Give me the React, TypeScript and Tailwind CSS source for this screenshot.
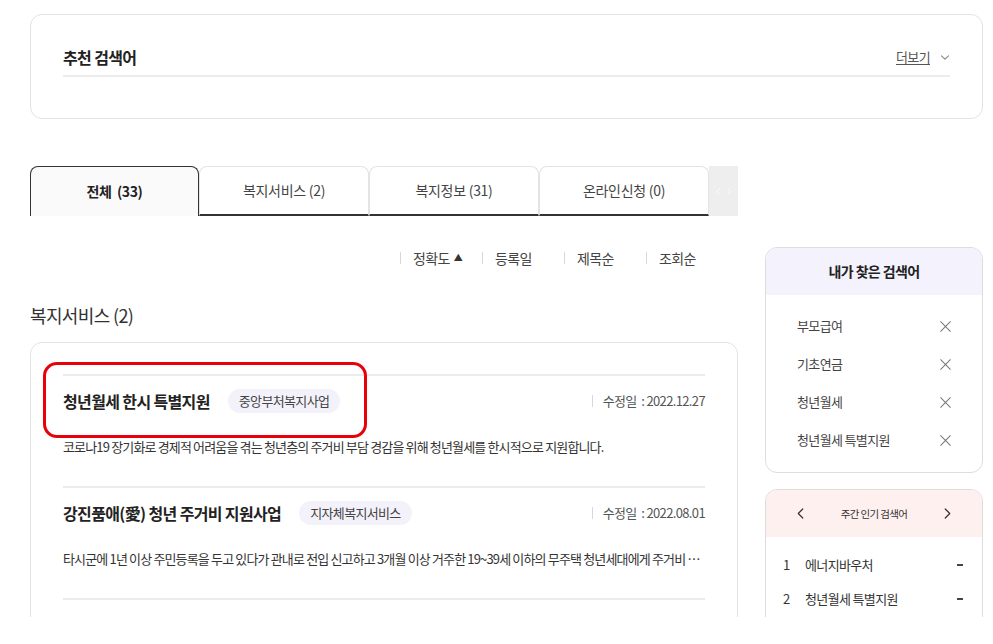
import React from 'react';

const tabs = ['복지서비스 (2)', '복지정보 (31)', '온라인신청 (0)'];
const sorts = ['정확도', '등록일', '제목순', '조회순'];
const myKeywords = ['부모급여', '기초연금', '청년월세', '청년월세 특별지원'];
const popular = ['에너지바우처', '청년월세 특별지원'];

const results = [
  {
    title: '청년월세 한시 특별지원',
    badge: '중앙부처복지사업',
    date: '2022.12.27',
    desc: '코로나19 장기화로 경제적 어려움을 겪는 청년층의 주거비 부담 경감을 위해 청년월세를 한시적으로 지원합니다.',
  },
  {
    title: '강진품애(愛) 청년 주거비 지원사업',
    badge: '지자체복지서비스',
    date: '2022.08.01',
    desc: '타시군에 1년 이상 주민등록을 두고 있다가 관내로 전입 신고하고 3개월 이상 거주한 19~39세 이하의 무주택 청년세대에게 주거비 일부를 지원합니다.',
  },
];

const Chevron = ({ dir, className }: { dir: 'left' | 'right' | 'down'; className?: string }) => {
  const d = dir === 'left' ? 'M9 2 L3 8 L9 14' : dir === 'right' ? 'M3 2 L9 8 L3 14' : 'M2 4 L7 9 L12 4';
  const vb = dir === 'down' ? '0 0 14 13' : '0 0 12 16';
  return (
    <svg viewBox={vb} className={className} fill="none" stroke="currentColor" strokeWidth={1.6} strokeLinecap="round" strokeLinejoin="round">
      <path d={d} />
    </svg>
  );
};

const CloseIcon = () => (
  <svg viewBox="0 0 12 12" className="h-[11px] w-[11px] text-[#777]" fill="none" stroke="currentColor" strokeWidth={1.1}>
    <path d="M0.5 0.5 L11.5 11.5 M11.5 0.5 L0.5 11.5" />
  </svg>
);

export default function App() {
  return (
    <div className="h-[644px] bg-white">
      <div className="h-[617px] overflow-hidden bg-white pl-[30px] pr-[10px] pt-[14px] font-['Noto_Sans_CJK_KR','Noto_Sans',sans-serif] tracking-[-0.04em] text-[#222]">
        {/* 추천 검색어 */}
        <section className="h-[105px] rounded-[12px] border border-[#e2e2e2] px-[32px] pt-[32px]">
          <div className="flex items-center justify-between border-b-2 border-[#ececec] pb-[8px]">
            <h2 className="text-[16px] font-bold leading-[20px]">추천 검색어</h2>
            <button className="flex items-center gap-[10px] text-[13px] leading-[20px] text-[#555]">
              <span className="underline underline-offset-2">더보기</span>
              <Chevron dir="down" className="h-[9px] w-[10px] text-[#888]" />
            </button>
          </div>
        </section>

        <div className="mt-[47px] flex gap-[27px]">
          <main className="w-[708px]">
            {/* tabs */}
            <div className="flex h-[50px]">
              <button className="w-[169px] rounded-t-[8px] border border-b-0 border-[#333] bg-[#fafafa] text-[14px] font-bold tracking-[-0.03em]">
                전체&nbsp; (33)
              </button>
              {tabs.map((t) => (
                <button
                  key={t}
                  className="w-[170px] rounded-t-[8px] border border-[#e4e4e4] border-b-2 border-b-[#333] text-[14px] tracking-[-0.02em] text-[#444]"
                >
                  {t}
                </button>
              ))}
              <div className="flex w-[29px] items-center justify-center gap-[5px] bg-[#eeeeee] text-white">
                <Chevron dir="left" className="h-[9px] w-[6px]" />
                <Chevron dir="right" className="h-[9px] w-[6px]" />
              </div>
            </div>

            {/* sort */}
            <div className="mt-[33px] flex h-[18px] justify-end pr-[10px]">
              {sorts.map((s, i) => (
                <div key={s} className="flex w-[82px] items-center">
                  <span className="h-[12px] w-px bg-[#d8d8d8]" />
                  <span className="ml-[12px] flex items-center gap-[4px] text-[14px] leading-[18px] text-[#444]">
                    {s}
                    {i === 0 && <span className="text-[9px] text-[#333]">▲</span>}
                  </span>
                </div>
              ))}
            </div>

            <h3 className="mt-[36px] text-[18px] leading-[24px] text-[#333]">복지서비스 (2)</h3>

            {/* results */}
            <div className="relative mt-[15px] rounded-[12px] border border-[#e3e3e3] px-[32px] pb-[40px] pt-[31px]">
              {results.map((r) => (
                <article key={r.title} className="border-t-2 border-[#ececec] pb-[29px] pt-[13px]">
                  <div className="flex h-[24px] items-center">
                    <h4 className="text-[16px] font-bold leading-[24px] text-[#222]">{r.title}</h4>
                    <span className="ml-[18px] rounded-full bg-[#f3f2fa] px-[11px] text-[13px] leading-[24px] tracking-[-0.05em] text-[#444]">
                      {r.badge}
                    </span>
                    <div className="ml-auto flex items-center text-[13px] text-[#555]">
                      <span className="mr-[10px] h-[12px] w-px bg-[#d8d8d8]" />
                      수정일&nbsp; :&nbsp;{r.date}
                    </div>
                  </div>
                  <p className="mt-[24px] truncate text-[13px] leading-[20px] tracking-[-0.065em] text-[#333]">{r.desc}</p>
                </article>
              ))}
              <div className="border-t-2 border-[#ececec]" />
              <div className="pointer-events-none absolute left-[12px] top-[19px] h-[76px] w-[324px] rounded-[14px] border-[3px] border-[#e8000b]" />
            </div>
          </main>

          {/* sidebar */}
          <aside className="mt-[81px] w-[218px]">
            <div className="overflow-hidden rounded-[12px] border border-[#dddddd]">
              <div className="flex h-[47px] items-center justify-center bg-[#f4f2fd] text-[14px] font-bold">
                내가 찾은 검색어
              </div>
              <ul className="px-[31px] pb-[13px] pt-[12px]">
                {myKeywords.map((k) => (
                  <li key={k} className="flex h-[38px] items-center justify-between text-[13px] text-[#444]">
                    {k}
                    <CloseIcon />
                  </li>
                ))}
              </ul>
            </div>

            <div className="mt-[16px] overflow-hidden rounded-[12px] border border-[#dddddd]">
              <div className="flex h-[47px] items-center justify-between bg-[#fdf0ef] px-[30px] text-[#333]">
                <Chevron dir="left" className="h-[13px] w-[9px]" />
                <span className="text-[10.5px]">주간 인기 검색어</span>
                <Chevron dir="right" className="h-[13px] w-[9px]" />
              </div>
              <ul className="px-[17px] pb-[20px] pt-[11px]">
                {popular.map((p, i) => (
                  <li key={p} className="flex h-[34px] items-center text-[13px] text-[#333]">
                    <span className="w-[22px]">{i + 1}</span>
                    {p}
                    <span className="ml-auto mr-[2px] h-[2px] w-[6px] bg-[#444]" />
                  </li>
                ))}
              </ul>
            </div>
          </aside>
        </div>
      </div>
    </div>
  );
}
